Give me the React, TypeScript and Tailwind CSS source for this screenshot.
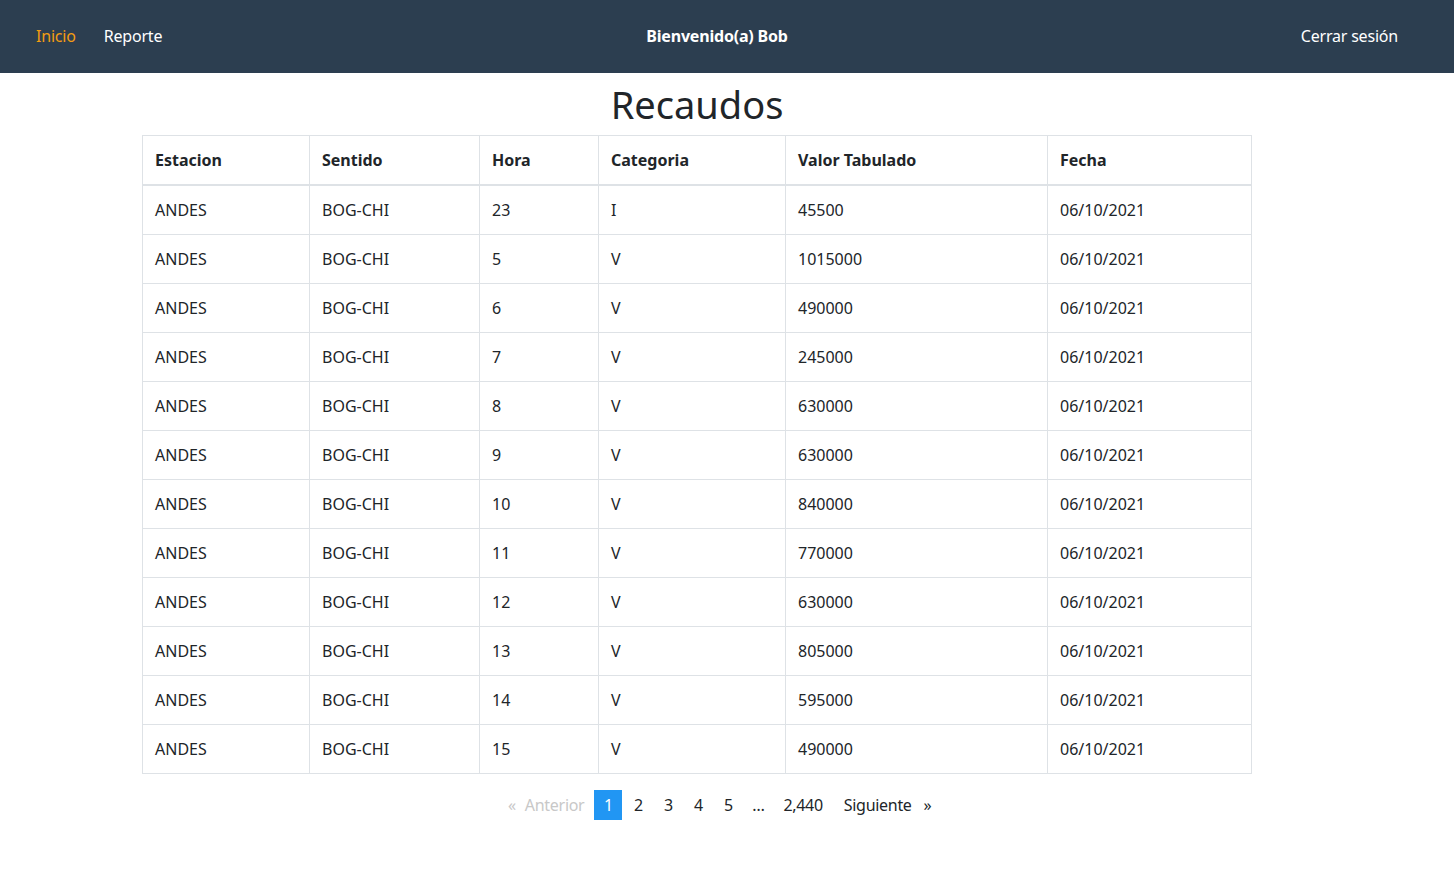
import React from 'react';

const rows: [string, string, string][] = [
  ['23', 'I', '45500'],
  ['5', 'V', '1015000'],
  ['6', 'V', '490000'],
  ['7', 'V', '245000'],
  ['8', 'V', '630000'],
  ['9', 'V', '630000'],
  ['10', 'V', '840000'],
  ['11', 'V', '770000'],
  ['12', 'V', '630000'],
  ['13', 'V', '805000'],
  ['14', 'V', '595000'],
  ['15', 'V', '490000'],
];

const cols = ['w-[167px]', 'w-[170px]', 'w-[119px]', 'w-[187px]', 'w-[262px]', 'w-[204px]'];
const heads = ['Estacion', 'Sentido', 'Hora', 'Categoria', 'Valor Tabulado', 'Fecha'];

export default function App() {
  return (
    <div className="min-h-[872px] bg-white text-[#212529] text-[16px] leading-6" style={{ fontFamily: '"Noto Sans", "Open Sans", sans-serif' }}>
      <nav className="h-[73px] bg-[#2c3e50] flex items-center pl-[36px] pr-[56px] pb-[2px] tracking-[-0.2px]">
        <div className="w-[300px] flex items-center gap-[28px]">
          <a className="text-[#f39c12]">Inicio</a>
          <a className="text-white">Reporte</a>
        </div>
        <div className="flex-1 flex justify-center">
          <span className="text-white font-bold">Bienvenido(a) Bob</span>
        </div>
        <div className="w-[300px] flex justify-end">
          <a className="text-white">Cerrar sesión</a>
        </div>
      </nav>

      <div className="w-[1110px] ml-[142px]">
        <h1 className="text-[38px] leading-[48px] font-normal text-center mt-[7px] mb-[7px]">Recaudos</h1>
        <table className="w-full border-collapse table-fixed">
          <thead>
            <tr>
              {heads.map((h, i) => (
                <th key={h} className={`${cols[i]} text-left font-bold border border-[#dee2e6] border-b-2 px-3 py-3 align-bottom`}>{h}</th>
              ))}
            </tr>
          </thead>
          <tbody>
            {rows.map(([hora, cat, val], i) => (
              <tr key={i}>
                <td className="border border-[#dee2e6] px-3 py-3">ANDES</td>
                <td className="border border-[#dee2e6] px-3 py-3">BOG-CHI</td>
                <td className="border border-[#dee2e6] px-3 py-3">{hora}</td>
                <td className="border border-[#dee2e6] px-3 py-3">{cat}</td>
                <td className="border border-[#dee2e6] px-3 py-3">{val}</td>
                <td className="border border-[#dee2e6] px-3 py-3">06/10/2021</td>
              </tr>
            ))}
          </tbody>
        </table>

        <ul className="flex items-center mt-4 ml-[362px] tracking-[-0.3px]">
          <li className="pl-[4px] py-[3px] text-[#c8c8c8]">«</li>
          <li className="pl-[9px] pr-[9px] py-[3px] text-[#c8c8c8]">Anterior</li>
          <li className="w-[28px] text-center py-[3px] bg-[#2196f3] text-white mx-[1px]">1</li>
          <li className="w-[30px] text-center py-[3px]">2</li>
          <li className="w-[30px] text-center py-[3px]">3</li>
          <li className="w-[30px] text-center py-[3px]">4</li>
          <li className="w-[30px] text-center py-[3px]">5</li>
          <li className="w-[30px] text-center py-[3px]">…</li>
          <li className="px-[10px] py-[3px]">2,440</li>
          <li className="pl-[11px] pr-[8px] py-[3px]">Siguiente</li>
          <li className="px-[4px] py-[3px]">»</li>
        </ul>
      </div>
    </div>
  );
}
